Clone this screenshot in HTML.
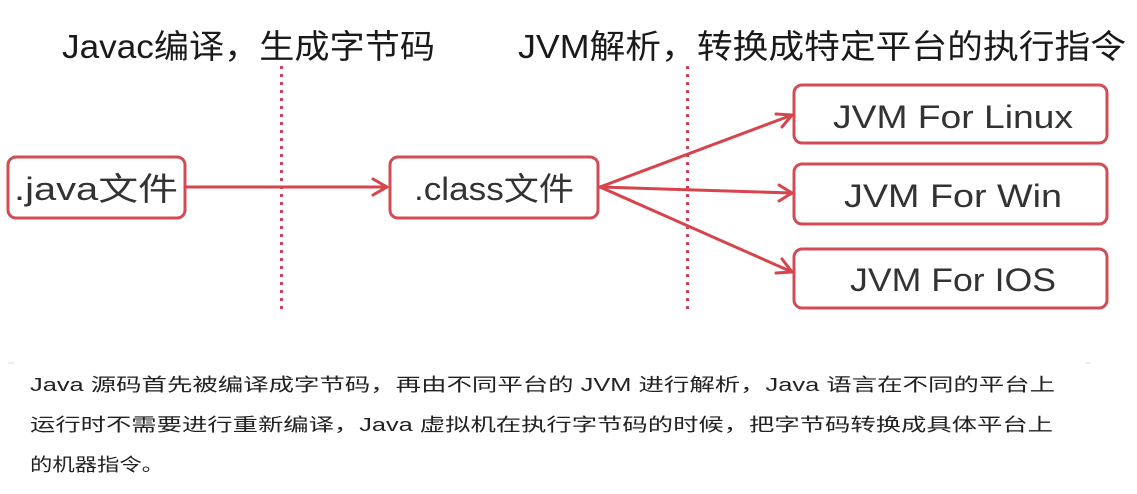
<!DOCTYPE html>
<html><head><meta charset="utf-8"><style>
html,body{margin:0;padding:0;background:#fff;width:1137px;height:494px;overflow:hidden}
svg{display:block}
</style></head><body>
<svg width="1137" height="494" viewBox="0 0 1137 494" xmlns="http://www.w3.org/2000/svg">
<g font-family="Liberation Sans, Noto Sans CJK SC, sans-serif" fill="#1a1a1a">
<text x="62" y="58" font-size="33" textLength="373" lengthAdjust="spacingAndGlyphs">Javac编译，生成字节码</text>
<text x="518" y="58" font-size="33" textLength="608" lengthAdjust="spacingAndGlyphs">JVM解析，转换成特定平台的执行指令</text>
</g>
<g stroke="#c9415a" stroke-width="3" stroke-dasharray="3 5">
<line x1="281.5" y1="66" x2="281.5" y2="312"/>
<line x1="687.5" y1="66" x2="687.5" y2="312"/>
</g>
<g fill="#fff" stroke="#d24c55" stroke-width="3">
<rect x="8" y="157" width="177" height="61" rx="8"/>
<rect x="390" y="157" width="208" height="61" rx="8"/>
<rect x="794" y="85" width="313" height="58" rx="8"/>
<rect x="794" y="164" width="313" height="60" rx="8"/>
<rect x="794" y="249" width="313" height="59" rx="8"/>
</g>
<g stroke="#d6444c" stroke-width="3" fill="none" stroke-linecap="round" stroke-linejoin="round">
<line x1="185" y1="187" x2="386" y2="187"/>
<polyline points="373,179 387,187 373,195"/>
<line x1="600" y1="187" x2="792" y2="115"/>
<polyline points="776,114 792,115 782,127"/>
<line x1="600" y1="187" x2="792" y2="193"/>
<polyline points="779,185 792,193 779,201"/>
<line x1="600" y1="187" x2="792" y2="272"/>
<polyline points="782,259 792,272 776,273"/>
</g>
<g font-family="Liberation Sans, Noto Sans CJK SC, sans-serif" fill="#333" font-size="32">
<text x="14" y="200" textLength="164" lengthAdjust="spacingAndGlyphs">.java文件</text>
<text x="414" y="200" textLength="160" lengthAdjust="spacingAndGlyphs">.class文件</text>
<text x="833" y="128" textLength="240" lengthAdjust="spacingAndGlyphs">JVM For Linux</text>
<text x="844" y="207" textLength="218" lengthAdjust="spacingAndGlyphs">JVM For Win</text>
<text x="850" y="291" textLength="206" lengthAdjust="spacingAndGlyphs">JVM For IOS</text>
</g>
<line x1="8" y1="363" x2="14" y2="363" stroke="#ddd" stroke-width="1"/>
<line x1="1085" y1="363" x2="1090" y2="363" stroke="#ddd" stroke-width="1"/>
<g font-family="Liberation Sans, Noto Sans CJK SC, sans-serif" fill="#222" font-size="18">
<text x="30" y="391" textLength="1025" lengthAdjust="spacingAndGlyphs">Java 源码首先被编译成字节码，再由不同平台的 JVM 进行解析，Java 语言在不同的平台上</text>
<text x="30" y="431" textLength="1023" lengthAdjust="spacingAndGlyphs">运行时不需要进行重新编译，Java 虚拟机在执行字节码的时候，把字节码转换成具体平台上</text>
<text x="30" y="471" textLength="134" lengthAdjust="spacingAndGlyphs">的机器指令。</text>
</g>
</svg>
</body></html>
